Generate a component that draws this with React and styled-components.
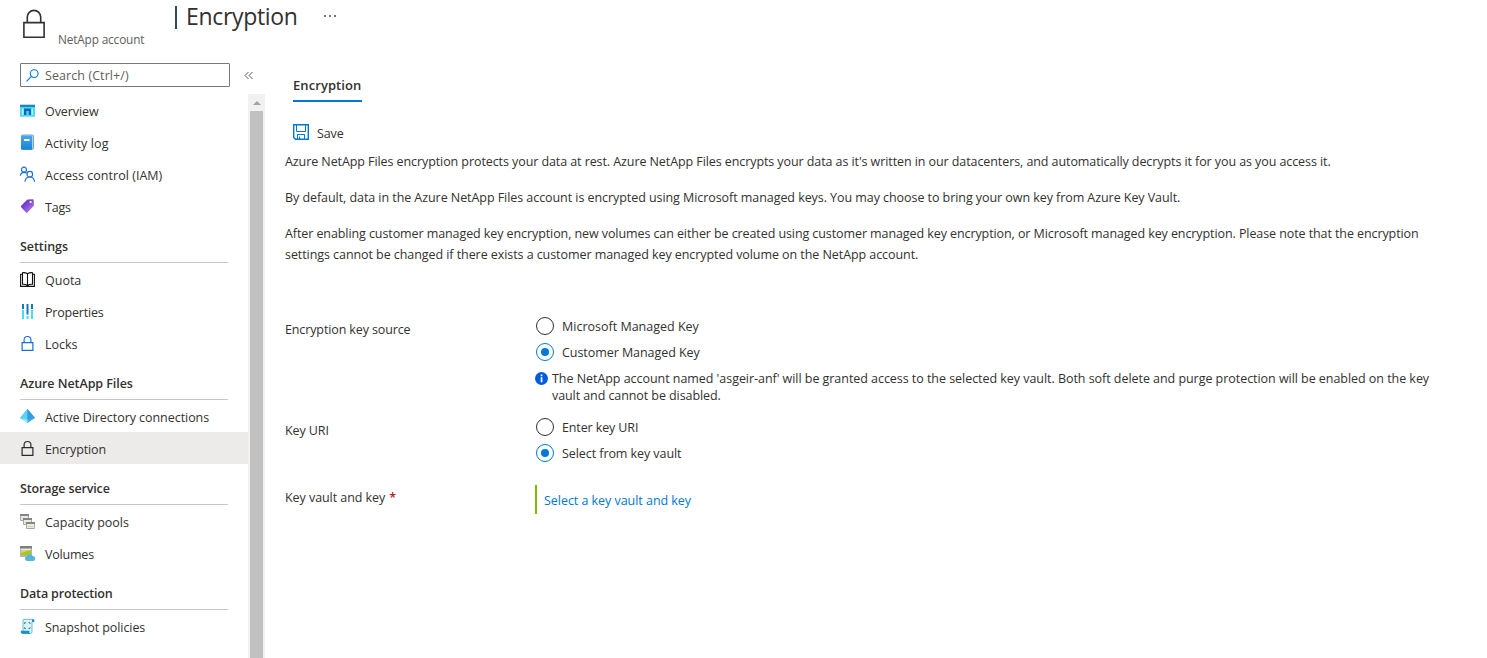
import React from "react";
import styled, { createGlobalStyle } from "styled-components";

const Global = createGlobalStyle`
  *, *::before, *::after { box-sizing: border-box; }
  body {
    margin: 0;
    background: #fff;
    color: #323130;
    font-family: "Open Sans", "Noto Sans", sans-serif;
    font-size: 12.5px;
    overflow: hidden;
  }
`;

const Page = styled.div`
  display: flex;
  flex-direction: column;
  height: 658px;
  overflow: hidden;
`;

const Header = styled.header`
  display: flex;
  align-items: flex-start;
  height: 63px;
  padding-left: 22px;
  flex: none;
`;

const HeaderIcon = styled.div`
  width: 36px;
  padding-top: 9px;
  svg { display: block; }
`;

const ResourceType = styled.div`
  width: 117px;
  padding-top: 31px;
  font-size: 11.8px;
  line-height: 16px;
  color: #605e5c;
  white-space: nowrap;
  letter-spacing: -0.14px;
`;

const TitleBar = styled.span`
  width: 2px;
  height: 23px;
  margin: 6px 9px 0 0;
  background: #2b4a5c;
`;

const Title = styled.h1`
  margin: 0;
  width: 138px;
  font-size: 23px;
  line-height: 32px;
  font-weight: 400;
  letter-spacing: -0.32px;
`;

const More = styled.span`
  display: flex;
  gap: 3px;
  padding-top: 15px;
  i { width: 2px; height: 2px; background: #797775; }
`;

const Body = styled.div`
  display: flex;
  flex: 1;
  min-height: 0;
`;

const Sidebar = styled.aside`
  display: flex;
  flex-direction: column;
  width: 265px;
  flex: none;
`;

const SearchRow = styled.div`
  display: flex;
  align-items: center;
  height: 24px;
  margin: 0 0 7px 20px;
`;

const SearchBox = styled.div`
  display: flex;
  align-items: center;
  width: 210px;
  height: 24px;
  padding-left: 5px;
  border: 1px solid #7a7876;
  border-radius: 1px;
  color: #605e5c;
  svg { margin-right: 6px; }
`;

const Collapse = styled.span`
  display: flex;
  margin-left: 14px;
`;

const NavArea = styled.div`
  display: flex;
  flex: 1;
  min-height: 0;
`;

const Nav = styled.nav`
  width: 248px;
`;

const NavItem = styled.a`
  display: flex;
  align-items: center;
  height: 32px;
  padding: 1px 0 0 20px;
  background: ${(p) => (p.$active ? "#edebe9" : "transparent")};
  svg { margin-right: 10px; flex: none; overflow: visible; }
`;

const NavHeading = styled.h2`
  height: 41px;
  margin: 0 20px 0 20px;
  padding-top: 16px;
  border-bottom: 1px solid #c8c6c4;
  font-size: 12.5px;
  line-height: 18px;
  font-weight: 600;
`;

const Scrollbar = styled.div`
  display: flex;
  flex-direction: column;
  align-items: center;
  width: 17px;
  background: #f1f1f1;
`;

const ScrollArrow = styled.div`
  display: flex;
  align-items: center;
  justify-content: center;
  height: 17px;
`;

const Thumb = styled.div`
  flex: 1;
  width: 13px;
  background: #c1c1c1;
`;

const Text = styled.span`
  padding-top: 2px;
  white-space: nowrap;
  line-height: 18px;
  letter-spacing: ${(p) => p.$ls || 0}px;
`;

const Main = styled.main`
  flex: 1;
  padding: 13px 0 0 20px;
`;

const Tab = styled.div`
  width: 69px;
  height: 26px;
  margin-left: 8px;
  border-bottom: 2px solid #0078d4;
  font-size: 13px;
  font-weight: 600;
  line-height: 18px;
  white-space: nowrap;
  letter-spacing: 0.08px;
`;

const Toolbar = styled.div`
  display: flex;
  align-items: center;
  gap: 8px;
  height: 22px;
  margin: 20px 0 0 8px;
  svg { margin-bottom: 2px; }
`;

const Paragraph = styled.p`
  display: flex;
  flex-direction: column;
  margin: 7px 0 15px;
  ${Text} { padding: 0; line-height: 21px; }
  & + & { margin-top: 0; }
`;

const Form = styled.div`
  padding-top: 33px;
`;

const FieldRow = styled.div`
  display: flex;
  height: ${(p) => p.$h}px;
`;

const Label = styled.div`
  width: 250px;
  padding-top: ${(p) => p.$top || 8}px;
  line-height: 18px;
`;

const Required = styled.span`
  color: #a4262c;
  margin-left: 4px;
  font-weight: 600;
`;

const Options = styled.div`
  display: flex;
  flex-direction: column;
`;

const RadioRow = styled.div`
  display: flex;
  align-items: center;
  height: 26px;
  padding-left: 1px;
  gap: 8px;
`;

const Dot = styled.span`
  display: flex;
  align-items: center;
  justify-content: center;
  width: 18px;
  height: 18px;
  border: 1px solid ${(p) => (p.$on ? "#0078d4" : "#323130")};
  border-radius: 50%;
  &::after {
    content: "";
    width: 8px;
    height: 8px;
    border-radius: 50%;
    background: ${(p) => (p.$on ? "#0078d4" : "transparent")};
  }
`;

const Info = styled.div`
  display: flex;
  gap: 4px;
  padding-top: 5px;
  svg { margin-top: 2px; flex: none; }
`;

const InfoText = styled.div`
  display: flex;
  flex-direction: column;
  ${Text} { padding: 0; line-height: 17px; }
`;

const LinkField = styled.div`
  display: flex;
  align-items: center;
  height: 29px;
  padding-left: 7px;
  border-left: 2px solid #7fba00;
  color: #0078d4;
`;

const Lock = ({ color }) => (
  <svg width="15" height="15" viewBox="0 0 15 15" fill="none" stroke={color} strokeWidth="1.2">
    <path d="M2.100 6.600h10.800v7.800H2.100zM4.100 6.600V3.900a3.400 3.400 0 0 1 6.800 0v2.700" />
  </svg>
);

const icons = {
  overview: (
    <svg width="15" height="15" viewBox="0 0 15 15">
      <path d="M0 2h15v11.700H0z" fill="#50d8f2" />
      <path d="M0 1.700h15V4H0z" fill="#1988b8" />
      <path d="M2 5.800h1.500v6H2zM11.500 5.800H13v6h-1.500z" fill="#b5f3fc" />
      <path d="M4 5.500h7v6.500H8.800V8H6.400v4H4z" fill="#0969bd" />
    </svg>
  ),
  log: (
    <svg width="15" height="15" viewBox="0 0.5 15 15">
      <defs>
        <linearGradient id="log" x1="0" y1="0" x2="0" y2="1">
          <stop stopColor="#4ba8eb" />
          <stop offset="1" stopColor="#1683d8" />
        </linearGradient>
      </defs>
      <rect x="1.500" y=".5" width="12" height="14.300" rx="1" fill="#dce9f4" stroke="#568fb8" strokeWidth=".8" />
      <rect x="1" y="1" width="11.300" height="14.300" rx="1" fill="url(#log)" />
      <path d="M4 4.500h5.500v2H4z" fill="#fff" />
    </svg>
  ),
  iam: (
    <svg width="15" height="15" viewBox="0 0.500 15 15" fill="none" stroke="#1b6ddb" strokeWidth="1.200">
      <circle cx="4" cy="3.200" r="2.500" />
      <circle cx="9.800" cy="7.700" r="2.800" />
      <path d="M.4 9.200C.7 7 2 5.800 4 5.800c1 0 1.900.3 2.600.9M5 15.200c.3-2.900 2.100-4.700 4.800-4.700s4.400 1.800 4.700 4.700" />
    </svg>
  ),
  tags: (
    <svg width="15" height="15" viewBox="0 0 15 15">
      <defs>
        <linearGradient id="tag" x1="0" y1="0" x2="1" y2="1">
          <stop offset=".2" stopColor="#6a2cc8" />
          <stop offset="1" stopColor="#b88be8" />
        </linearGradient>
      </defs>
      <path d="M1.200 6.800 6.700 1.200q.6-.6 1.300-.7l4.700-.2q1 0 1 .9l.2 4.700q0 .8-.6 1.400l-5.800 6.300q-.7.700-1.500 0L1.200 8.300q-.7-.7 0-1.500z" fill="url(#tag)" />
      <circle cx="10.600" cy="3" r="1.100" fill="#fff" />
    </svg>
  ),
  quota: (
    <svg width="15" height="15" viewBox="0 0 15 15" fill="none" stroke="#111" strokeWidth="1.100">
      <path d="M7.500 1.700Q5.500.4 2.500.7v11.500q3-.2 5 1.300 2-1.500 5-1.300V.7q-3-.3-5 1zM7.500 1.700v11.800M2.500 2.300H.6v12.100h13.800V2.300h-1.900" />
    </svg>
  ),
  properties: (
    <svg width="15" height="15" viewBox="0 1 15 15">
      <path d="M2 1h2v5H2zM6.500 1h2v10.500h-2zM11 1h2v5h-2z" fill="#0f77c6" />
      <path d="M2 7h2v9H2zM6.500 13h2v3h-2zM11 7h2v9h-2z" fill="#4bdcf5" />
    </svg>
  ),
  locks: <Lock color="#1b6ee0" />,
  ad: (
    <svg width="15" height="15" viewBox="0 0 15 15">
      <path d="M7.500 0 15 9 7.500 14 0 9z" fill="#35b4ec" />
      <path d="M7.500 0V10.800L0 9z" fill="#5ed3f5" />
      <path d="M7.500 0 15 9 7.500 10.800z" fill="#3899dc" />
      <path d="M0 9 7.500 10.800V14z" fill="#a4e9fa" />
    </svg>
  ),
  encryption: <Lock color="#2b2a29" />,
  pools: (
    <svg width="15" height="15" viewBox="0 0 15 15">
      {[[0, 0], [3, 4], [6, 8]].map(([x, y]) => (
        <g key={x}>
          <path d={`M${x} ${y}h9v7h-9z`} fill="#fff" />
          <path d={`M${x + 0.5} ${y + 0.5}h8v6h-8z`} fill="#e9ebe4" stroke="#a8a8a8" />
          <path d={`M${x} ${y}h9v2h-9z`} fill="#858585" />
          <path d={`M${x + 2} ${y + 4}h5v1h-5z`} fill="#c9d79a" />
        </g>
      ))}
    </svg>
  ),
  volumes: (
    <svg width="15" height="15" viewBox="0 0 15 15">
      <path d="M0 0h12v11H0z" fill="#b4b4b4" />
      <path d="M0 0h12v2.500H0z" fill="#7e7e7e" />
      <path d="M1 2.700h10v1.200H1z" fill="#eee" />
      <path d="M1 4h10v5H1z" fill="#a9c520" />
      <path d="M1 4h10L1 7z" fill="#c6d96a" />
      <path d="M7 15a2.400 2.400 0 0 1-.2-4.700 3.200 3.200 0 0 1 5.900-.3 2.500 2.500 0 0 1 0 5z" fill="#59b4d9" />
    </svg>
  ),
  snapshot: (
    <svg width="15" height="15" viewBox="0 0.500 15 15">
      <path d="M3 1.500Q3 .8 4 .8h9q1 0 1 1.200v1.200h-2V13q0 2-1.500 2H3z" fill="#d9f3fb" stroke="#52b9dc" strokeWidth=".9" />
      <path d="M12 1h1.200q1 0 1 1.200v1H12z" fill="#198ab3" />
      <path d="M.8 12.300h8.500q-.3 2.700 1.300 2.900H2.300Q.6 15.200.8 12.300z" fill="#1295c4" />
      <path d="M4.500 5.500V4.200H6M8.500 4.200H10v1.300M4.500 8.700V10H6M8.500 10H10V8.700" fill="none" stroke="#667580" strokeWidth="1" />
    </svg>
  ),
};

const groups = [
  {
    items: [
      ["overview", "Overview", -0.08],
      ["log", "Activity log", 0.1],
      ["iam", "Access control (IAM)", 0.03],
      ["tags", "Tags", -0.2],
    ],
  },
  {
    title: "Settings",
    ls: -0.05,
    items: [
      ["quota", "Quota", 0],
      ["properties", "Properties", -0.2],
      ["locks", "Locks", 0],
    ],
  },
  {
    title: "Azure NetApp Files",
    ls: -0.06,
    items: [
      ["ad", "Active Directory connections", -0.05],
      ["encryption", "Encryption", -0.15],
    ],
  },
  {
    title: "Storage service",
    ls: -0.13,
    items: [
      ["pools", "Capacity pools", -0.03],
      ["volumes", "Volumes", -0.2],
    ],
  },
  {
    title: "Data protection",
    ls: -0.16,
    items: [["snapshot", "Snapshot policies", -0.08]],
  },
];

const paragraphs = [
  [["Azure NetApp Files encryption protects your data at rest. Azure NetApp Files encrypts your data as it's written in our datacenters, and automatically decrypts it for you as you access it.", -0.083]],
  [["By default, data in the Azure NetApp Files account is encrypted using Microsoft managed keys. You may choose to bring your own key from Azure Key Vault.", -0.062]],
  [
    ["After enabling customer managed key encryption, new volumes can either be created using customer managed key encryption, or Microsoft managed key encryption. Please note that the encryption", -0.087],
    ["settings cannot be changed if there exists a customer managed key encrypted volume on the NetApp account.", -0.067],
  ],
];

const Radio = ({ on, label, ls }) => (
  <RadioRow>
    <Dot $on={on} />
    <Text $ls={ls}>{label}</Text>
  </RadioRow>
);

export default function App() {
  return (
    <Page>
      <Global />
      <Header>
        <HeaderIcon>
          <svg width="24" height="30" viewBox="0 0 24 30" fill="none" stroke="#323130" strokeWidth="1.600">
            <path d="M1.900 13.600h20.200v14.600H1.900zM5.300 13.600V8.100a6.700 6.700 0 0 1 13.400 0v5.500" />
          </svg>
        </HeaderIcon>
        <ResourceType>NetApp account</ResourceType>
        <TitleBar />
        <Title>Encryption</Title>
        <More><i /><i /><i /></More>
      </Header>
      <Body>
        <Sidebar>
          <SearchRow>
            <SearchBox>
              <svg width="13" height="13" viewBox="0 0 13 13" fill="none" stroke="#0078d4" strokeWidth="1.100">
                <circle cx="8.200" cy="4.600" r="3.900" />
                <path d="M5.400 7.400.5 12.400" />
              </svg>
              <Text $ls={0.08}>Search (Ctrl+/)</Text>
            </SearchBox>
            <Collapse>
              <svg width="10" height="9" viewBox="0 0 10 9" fill="none" stroke="#605e5c" strokeWidth="1">
                <path d="M4.500 1 1 4.500 4.500 8M8.500 1 5 4.500 8.500 8" />
              </svg>
            </Collapse>
          </SearchRow>
          <NavArea>
            <Nav>
              {groups.map((g, i) => (
                <React.Fragment key={i}>
                  {g.title && <NavHeading><Text $ls={g.ls}>{g.title}</Text></NavHeading>}
                  {g.items.map(([icon, label, ls]) => (
                    <NavItem key={icon} $active={icon === "encryption"}>
                      {icons[icon]}
                      <Text $ls={ls}>{label}</Text>
                    </NavItem>
                  ))}
                </React.Fragment>
              ))}
            </Nav>
            <Scrollbar>
              <ScrollArrow>
                <svg width="8" height="4" viewBox="0 0 8 4"><path d="M4 0 8 4H0z" fill="#a3a3a3" /></svg>
              </ScrollArrow>
              <Thumb />
            </Scrollbar>
          </NavArea>
        </Sidebar>
        <Main>
          <Tab>Encryption</Tab>
          <Toolbar>
            <svg width="16" height="16" viewBox="0 0 16 16" fill="none" stroke="#0078d4">
              <path d="M.7.7h14.600v14.600H2.500L.7 13.500z" strokeWidth="1.400" />
              <path d="M3.500 1v6.500h9V1M4.500 15v-4.500h7V15M6.500 12.500V15" strokeWidth="1" />
            </svg>
            <Text $ls={-0.1}>Save</Text>
          </Toolbar>
          {paragraphs.map((lines, i) => (
            <Paragraph key={i}>
              {lines.map(([t, ls]) => <Text key={t} $ls={ls}>{t}</Text>)}
            </Paragraph>
          ))}
          <Form>
            <FieldRow $h={101}>
              <Label><Text $ls={-0.12}>Encryption key source</Text></Label>
              <Options>
                <Radio label="Microsoft Managed Key" />
                <Radio on label="Customer Managed Key" ls={-0.06} />
                <Info>
                  <svg width="13" height="13" viewBox="0 0 13 13">
                    <circle cx="6.500" cy="6.500" r="6.500" fill="#015cda" />
                    <path d="M5.700 5.300h1.700v5H5.700zM5.700 2.600h1.700v1.700H5.700z" fill="#fff" />
                  </svg>
                  <InfoText>
                    <Text $ls={-0.044}>The NetApp account named 'asgeir-anf' will be granted access to the selected key vault. Both soft delete and purge protection will be enabled on the key</Text>
                    <Text $ls={-0.08}>vault and cannot be disabled.</Text>
                  </InfoText>
                </Info>
              </Options>
            </FieldRow>
            <FieldRow $h={71}>
              <Label><Text $ls={-0.1}>Key URI</Text></Label>
              <Options>
                <Radio label="Enter key URI" ls={-0.12} />
                <Radio on label="Select from key vault" ls={-0.07} />
              </Options>
            </FieldRow>
            <FieldRow $h={29}>
              <Label $top={4}><Text $ls={-0.06}>Key vault and key</Text><Required>*</Required></Label>
              <LinkField><Text $ls={-0.04}>Select a key vault and key</Text></LinkField>
            </FieldRow>
          </Form>
        </Main>
      </Body>
    </Page>
  );
}
